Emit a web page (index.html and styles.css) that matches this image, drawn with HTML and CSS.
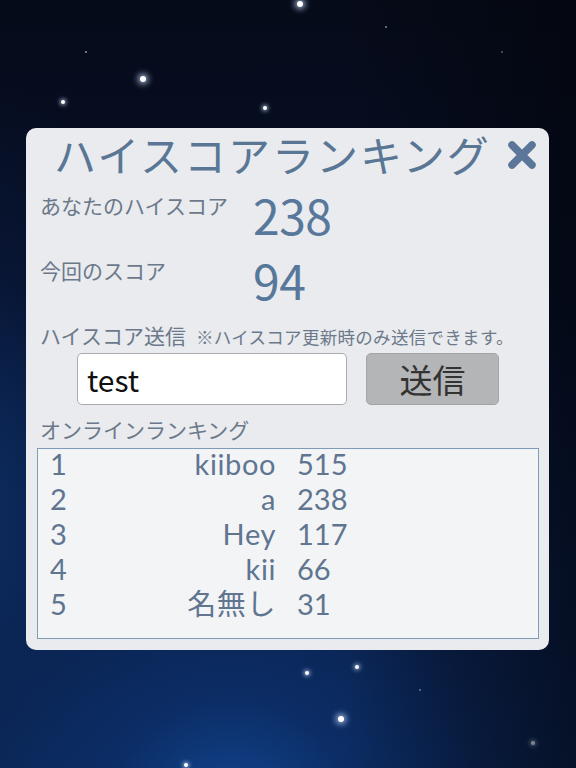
FILE: index.html
```html
<!DOCTYPE html>
<html lang="ja">
<head>
<meta charset="utf-8">
<title>ハイスコアランキング</title>
<link rel="stylesheet" href="styles.css">
</head>
<body>
<div class="screen">
  <div class="sky">
    <span class="star big" style="left:300px;top:4px"></span>
    <span class="star big" style="left:143px;top:79px"></span>
    <span class="star" style="left:63px;top:102px"></span>
    <span class="star" style="left:265px;top:108px"></span>
    <span class="star dim" style="left:386px;top:27px"></span>
    <span class="star dim" style="left:502px;top:52px"></span>
    <span class="star dim" style="left:86px;top:52px"></span>
    <span class="star" style="left:307px;top:673px"></span>
    <span class="star" style="left:357px;top:667px"></span>
    <span class="star big" style="left:341px;top:719px"></span>
    <span class="star" style="left:533px;top:743px"></span>
    <span class="star" style="left:186px;top:765px"></span>
    <span class="star dim" style="left:420px;top:690px"></span>
  </div>
  <div class="panel">
    <div class="title-row">
      <h1 class="title">ハイスコアランキング</h1>
      <svg class="close" width="30" height="30" viewBox="0 0 30 30" aria-label="閉じる">
        <path d="M5 5 L25 25 M25 5 L5 25" stroke="#5b7699" stroke-width="7.5" stroke-linecap="round" fill="none"/>
      </svg>
    </div>
    <div class="scores">
      <div class="score-row">
        <div class="score-label">あなたのハイスコア</div>
        <div class="score-value">238</div>
      </div>
      <div class="score-row">
        <div class="score-label">今回のスコア</div>
        <div class="score-value">94</div>
      </div>
    </div>
    <div class="send-label">
      <span class="label">ハイスコア送信</span>
      <span class="note">※ハイスコア更新時のみ送信できます。</span>
    </div>
    <div class="send-row">
      <div class="name-input">test</div>
      <div class="send-btn">送信</div>
    </div>
    <div class="label rank-label">オンラインランキング</div>
    <div class="rank-box">
      <div class="rank-list">
        <div class="rank-row"><span class="r">1</span><span class="n">kiiboo</span><span class="s">515</span></div>
        <div class="rank-row"><span class="r">2</span><span class="n">a</span><span class="s">238</span></div>
        <div class="rank-row"><span class="r">3</span><span class="n">Hey</span><span class="s">117</span></div>
        <div class="rank-row"><span class="r">4</span><span class="n">kii</span><span class="s">66</span></div>
        <div class="rank-row"><span class="r">5</span><span class="n">名無し</span><span class="s">31</span></div>
      </div>
    </div>
  </div>
</div>
</body>
</html>
```
FILE: styles.css
```css
* { box-sizing: border-box; }
html, body { margin: 0; padding: 0; }
body {
  width: 576px;
  height: 768px;
  overflow: hidden;
  font-family: "Noto Sans CJK JP", "Noto Sans", sans-serif;
}
.screen {
  position: relative;
  width: 576px;
  height: 768px;
  padding: 128px 0 0 26px;
  background:
    radial-gradient(ellipse 280px 300px at 40% 108%, rgba(20,76,156,0.9) 0%, rgba(12,52,116,0.55) 45%, rgba(8,30,70,0) 100%),
    radial-gradient(ellipse 220px 420px at -5% 65%, rgba(14,52,110,0.75) 0%, rgba(10,36,80,0.3) 55%, rgba(6,20,45,0) 100%),
    linear-gradient(180deg, #060b19 0%, #07102a 40%, #0a1e48 75%, #0b2656 100%);
}
.screen::after {
  content: "";
  position: absolute;
  inset: 0;
  background: linear-gradient(90deg, rgba(0,0,0,0) 60%, rgba(2,4,10,0.6) 100%);
  pointer-events: none;
}
.sky { position: absolute; inset: 0; }
.star {
  position: absolute;
  width: 4px;
  height: 4px;
  margin: -2px 0 0 -2px;
  border-radius: 50%;
  background: #fff;
  box-shadow: 0 0 4px 1px rgba(200,220,255,0.8);
}
.star.big {
  width: 6px; height: 6px; margin: -3px 0 0 -3px;
  box-shadow: 0 0 6px 2px rgba(200,220,255,0.85);
}
.star.dim {
  width: 2px; height: 2px; margin: -1px 0 0 -1px;
  background: #8a96aa;
  box-shadow: none;
}
.panel {
  position: relative;
  z-index: 1;
  width: 523px;
  height: 522px;
  padding: 5px 10px 11px 11px;
  background: #e9ebee;
  border-radius: 10px;
  display: flex;
  flex-direction: column;
}
.title-row {
  display: flex;
  align-items: center;
  height: 42px;
}
.title {
  margin: 0 0 0 17px;
  font-size: 42px;
  line-height: 42px;
  font-weight: 400;
  color: #5a7695;
  letter-spacing: 2px;
}
.close {
  margin-left: auto;
  margin-right: 2px;
  margin-top: 2px;
}
.scores {
  margin-top: 20px;
  padding-left: 3px;
}
.score-row {
  display: grid;
  grid-template-columns: 212px auto;
  align-items: start;
  height: 65px;
}
.score-label {
  font-size: 21px;
  line-height: 21px;
  color: #6c798b;
}
.score-value {
  font-size: 48px;
  line-height: 38px;
  color: #57779b;
  letter-spacing: -0.5px;
  padding-left: 1px;
}
.send-label {
  display: flex;
  align-items: baseline;
  padding-left: 3px;
}
.label {
  font-size: 21px;
  line-height: 21px;
  color: #6c798b;
}
.note {
  margin-left: 10px;
  font-size: 17.5px;
  line-height: 21px;
  letter-spacing: 0.3px;
  color: #6c798b;
}
.send-row {
  display: flex;
  margin-top: 6px;
  padding-left: 40px;
  height: 52px;
}
.name-input {
  width: 270px;
  height: 52px;
  background: #fff;
  border: 1px solid #a9abae;
  border-radius: 5px;
  padding-left: 9px;
  font-size: 30px;
  line-height: 50px;
  color: #111;
}
.send-btn {
  margin-left: 19px;
  width: 133px;
  height: 52px;
  background: #b4b5b7;
  border: 1px solid #a3a4a6;
  border-radius: 5px;
  text-align: center;
  font-size: 33px;
  line-height: 50px;
  color: #333;
}
.rank-label {
  margin-top: 14px;
  padding-left: 3px;
}
.rank-box {
  margin-top: 8px;
  height: 192px;
  background: #f3f4f6;
  border: 1.5px solid #7f9bb8;
  padding: 0 0 0 12px;
}
.rank-list {
  margin-top: -3px;
}
.rank-row {
  display: grid;
  grid-template-columns: 60px 166px auto;
  height: 35px;
  font-family: Lato, "Noto Sans CJK JP", sans-serif;
  font-size: 29px;
  line-height: 35px;
  color: #5f7590;
}
.rank-row .n { text-align: right; letter-spacing: 0.6px; }
.rank-row .s { padding-left: 21px; }
```
